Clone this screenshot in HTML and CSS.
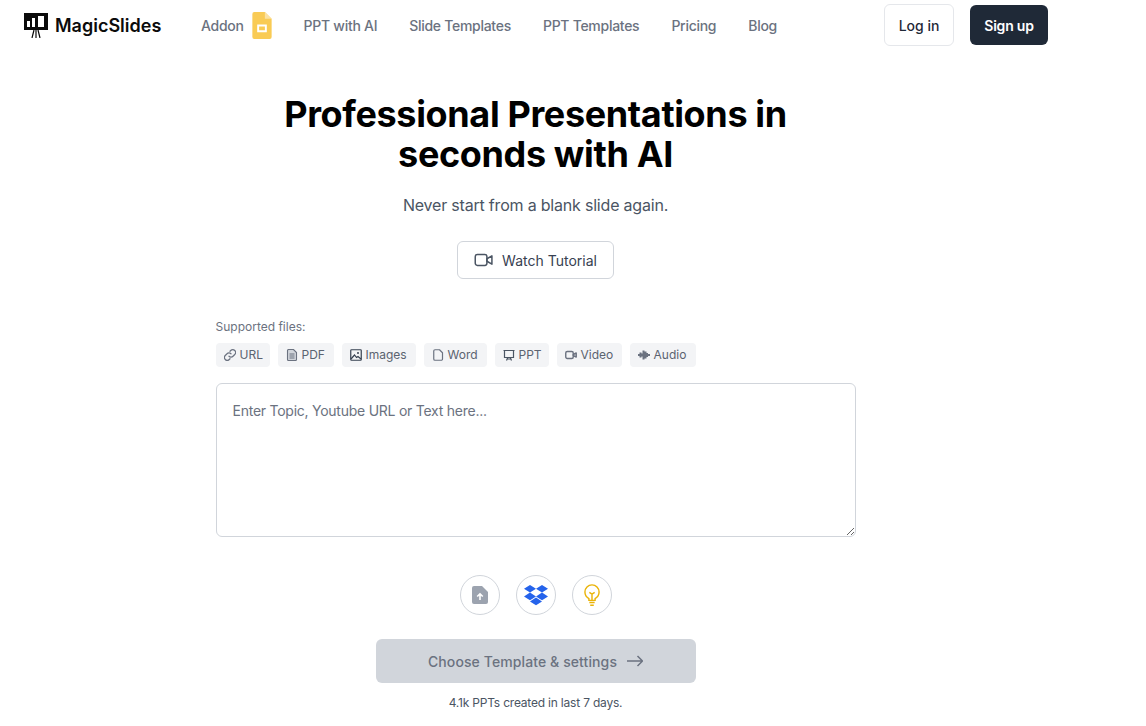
FILE: index.html
```html
<!DOCTYPE html>
<html lang="en">
<head>
  <meta charset="UTF-8">
  <meta name="viewport" content="width=device-width, initial-scale=1.0">
  <title>MagicSlides</title>
  <link rel="stylesheet" href="styles.css">
</head>
<body>
  <div class="page">
    <nav class="nav">
      <a class="logo">
        <svg width="24" height="25" viewBox="0 0 24 25">
          <path fill="#0b0b0b" fill-rule="evenodd" d="M0 0h24v17H0zM3 8v6h3V8zM8 5v9h3V5zM14 3v11h6V3z"/>
          <path stroke="#0b0b0b" stroke-width="1.2" fill="none" d="M10 17l-2 8M12 17v8M14 17l2 8"/>
        </svg>
        <span>MagicSlides</span>
      </a>
      <div class="nav-links">
        <a class="addon">Addon
          <svg width="20" height="27" viewBox="0 0 20 28">
            <path fill="#f9cb55" d="M2 0h11l7 7v19a2 2 0 0 1-2 2H2a2 2 0 0 1-2-2V2a2 2 0 0 1 2-2z"/>
            <path fill="#fbe2a3" d="M13 0l7 7h-7z"/>
            <path fill="#fff" fill-rule="evenodd" d="M5 13h10v8H5zM7 15v4h6v-4z"/>
          </svg>
        </a>
        <a>PPT with AI</a>
        <a>Slide Templates</a>
        <a>PPT Templates</a>
        <a>Pricing</a>
        <a>Blog</a>
      </div>
      <div class="nav-auth">
        <button class="btn-login">Log in</button>
        <button class="btn-signup">Sign up</button>
      </div>
    </nav>

    <main class="hero">
      <h1>Professional Presentations in<br>seconds with AI</h1>
      <p class="subtitle">Never start from a blank slide again.</p>
      <button class="btn-tutorial">
        <svg width="20" height="20" viewBox="0 0 24 24" fill="none" stroke="#4b5563" stroke-width="1.8" stroke-linejoin="round">
          <rect x="1.5" y="5.5" width="14" height="13" rx="2.5"/>
          <path d="M15.5 10.5l6-3.5v10l-6-3.5z"/>
        </svg>
        Watch Tutorial
      </button>

      <section class="form">
        <div class="files-label">Supported files:</div>
        <div class="chips">
          <span class="chip">
            <svg viewBox="0 0 24 24" fill="none" stroke="#6b7280" stroke-width="2.4" stroke-linecap="round"><path d="M10 14.500a5.500 5.500 0 0 0 8 0l3.500-3.500a5.500 5.500 0 0 0-8-8l-1.500 1.500"/><path d="M14 9.500a5.500 5.500 0 0 0-8 0l-3.500 3.500a5.500 5.500 0 0 0 8 8l1.500-1.500"/></svg>
            URL
          </span>
          <span class="chip">
            <svg viewBox="0 0 24 24" fill="none" stroke="#6b7280" stroke-width="2.2"><path d="M5 1h10l6 6v14a2 2 0 0 1-2 2H5a2 2 0 0 1-2-2V3a2 2 0 0 1 2-2z" fill="#d1d5db"/><path d="M7 10h10M7 14h10M7 18h10"/></svg>
            PDF
          </span>
          <span class="chip">
            <svg viewBox="0 0 24 24" fill="none" stroke="#374151" stroke-width="2.4"><rect x="1.500" y="1.500" width="21" height="21" rx="1.500"/><path d="M2 20l7-8 4 5 3-2 6 5"/><circle cx="16" cy="8" r="2" fill="#374151" stroke="none"/></svg>
            Images
          </span>
          <span class="chip">
            <svg viewBox="0 0 24 24" fill="none" stroke="#6b7280" stroke-width="2.4" stroke-linejoin="round"><path d="M6 1.500h9l6 6V20a2.500 2.500 0 0 1-2.500 2.500H6A2.500 2.500 0 0 1 3.500 20V4A2.500 2.500 0 0 1 6 1.500z"/></svg>
            Word
          </span>
          <span class="chip">
            <svg viewBox="0 0 24 24" fill="none" stroke="#4b5563" stroke-width="2.4"><path d="M1 3h22M3 3v14h18V3M7 23l2.500-6M17 23l-2.500-6M9 20h6"/></svg>
            PPT
          </span>
          <span class="chip">
            <svg viewBox="0 0 24 24" fill="none" stroke="#6b7280" stroke-width="2.800" stroke-linejoin="round"><rect x="1.500" y="5" width="15" height="14" rx="3"/><path d="M16.500 11l6-3v8l-6-3z"/></svg>
            Video
          </span>
          <span class="chip">
            <svg viewBox="0 0 24 24" fill="#6b7280"><path d="M0 10h3v4H0zM3 7h4v10H3zM7 9h2v6H7zM9 3h4v18H9zM13 5h4v14h-4zM17 8h3v8h-3zM20 10h4v4h-4z"/></svg>
            Audio
          </span>
        </div>
        <textarea class="topic" placeholder="Enter Topic, Youtube URL or Text here..."></textarea>

        <div class="tools">
          <span class="tool">
            <svg width="16" height="18" viewBox="0 0 16 18">
              <path fill="#9ca3af" d="M2 0h8l6 6v10a2 2 0 0 1-2 2H2a2 2 0 0 1-2-2V2a2 2 0 0 1 2-2z"/>
              <path fill="none" stroke="#fff" stroke-width="1.600" d="M8 14V8M5.200 10.500L8 7.800l2.800 2.700"/>
            </svg>
          </span>
          <span class="tool">
            <svg width="24" height="21" viewBox="0 0 24 21" fill="#2563eb">
              <path d="M6 0l6 3.800-6 3.800-6-3.800zM18 0l6 3.800-6 3.800-6-3.800zM0 11.400l6-3.800 6 3.800-6 3.800zM18 7.600l6 3.800-6 3.800-6-3.800zM6 16.400l6-3.800 6 3.800-6 3.800z"/>
            </svg>
          </span>
          <span class="tool">
            <svg width="16" height="23" viewBox="0 0 18 26" fill="none" stroke="#eab308" stroke-width="1.600">
              <path d="M5.500 16.500C3 15 1 12.500 1 9a8 8 0 0 1 16 0c0 3.500-2 6-4.500 7.500v2h-7z"/>
              <path d="M6 9.500l3 2 3-2M9 11.500v7M6 21h6M7 24h4"/>
            </svg>
          </span>
        </div>

        <button class="btn-choose">
          Choose Template &amp; settings
          <svg width="16" height="12" viewBox="0 0 16 12" fill="none" stroke="#6b7280" stroke-width="1.500"><path d="M0 6h15M10.500 1l5 5-5 5"/></svg>
        </button>
        <p class="count">4.1k PPTs created in last 7 days.</p>
      </section>
    </main>
  </div>
</body>
</html>
```

FILE: styles.css
```css
* {
  box-sizing: border-box;
}

body {
  margin: 0;
  font-family: Inter, 'Open Sans', sans-serif;
  background-color: #fff;
  color: #111;
  overflow: hidden;
}

.page {
  width: 1071px;
  height: 726px;
}

.nav {
  display: flex;
  align-items: center;
  height: 50px;
  padding: 0 23px 0 24px;
}

.logo {
  display: flex;
  align-items: center;
  gap: 7px;
  font-size: 18px;
  font-weight: 600;
  color: #0b0b0b;
  width: 177px;
}

.nav-links {
  display: flex;
  align-items: center;
  gap: 32px;
  flex: 1;
  font-size: 14px;
  font-weight: 500;
  letter-spacing: -0.28px;
  color: #6b7280;
}

.addon {
  display: flex;
  align-items: center;
  gap: 8px;
}

.nav-auth {
  display: flex;
  align-items: center;
  gap: 16px;
}

button {
  font-family: inherit;
}

.btn-login {
  width: 70px;
  height: 42px;
  background: #fff;
  border: 1px solid #e5e7eb;
  border-radius: 6px;
  font-size: 14px;
  font-weight: 500;
  color: #1f2937;
}

.btn-signup {
  width: 78px;
  height: 40px;
  background: #1f2937;
  border: none;
  border-radius: 6px;
  font-size: 14px;
  font-weight: 600;
  letter-spacing: -0.2px;
  color: #fff;
}

.hero {
  display: flex;
  flex-direction: column;
  align-items: center;
  padding-top: 44px;
}

h1 {
  margin: 0;
  font-size: 36px;
  line-height: 40px;
  font-weight: 700;
  letter-spacing: -0.36px;
  text-align: center;
  color: #000;
}

.subtitle {
  margin: 19px 0 0;
  font-size: 16px;
  line-height: 24px;
  letter-spacing: -0.2px;
  color: #4b5563;
}

.btn-tutorial {
  display: flex;
  align-items: center;
  justify-content: center;
  gap: 8px;
  width: 157px;
  height: 38px;
  margin-top: 24px;
  background: #fff;
  border: 1px solid #d1d5db;
  border-radius: 6px;
  font-size: 14px;
  font-weight: 400;
  color: #374151;
}

.form {
  display: flex;
  flex-direction: column;
  width: 640px;
  margin-top: 40px;
}

.files-label {
  font-size: 12px;
  line-height: 16px;
  color: #6b7280;
}

.chips {
  display: grid;
  grid-template-columns: 54px 56px 74px 63px 54px 65px 66px;
  gap: 8px;
  margin-top: 8px;
}

.chip {
  display: flex;
  align-items: center;
  gap: 4px;
  height: 24px;
  padding: 0 0 2px 8px;
  background: #f3f4f6;
  border-radius: 4px;
  font-size: 12px;
  color: #5b6370;
}

.chip svg {
  width: 12px;
  height: 12px;
  margin-top: 2px;
}

.topic {
  display: block;
  width: 100%;
  height: 154px;
  margin-top: 16px;
  padding: 17px 16px;
  border: 1px solid #d1d5db;
  border-radius: 6px;
  font-family: inherit;
  font-size: 14px;
  line-height: 20px;
  letter-spacing: -0.25px;
  outline: none;
}

.topic::placeholder {
  color: #6b7280;
}

.tools {
  display: flex;
  justify-content: center;
  gap: 16px;
  margin-top: 38px;
}

.tool {
  display: flex;
  align-items: center;
  justify-content: center;
  width: 40px;
  height: 40px;
  border: 1px solid #d1d5db;
  border-radius: 50%;
}

.btn-choose {
  display: flex;
  align-items: center;
  justify-content: center;
  gap: 10px;
  align-self: center;
  width: 320px;
  height: 44px;
  margin-top: 24px;
  background: #d1d5db;
  border: none;
  border-radius: 6px;
  font-size: 14px;
  font-weight: 500;
  letter-spacing: 0.1px;
  color: #6b7280;
}

.count {
  margin: 12px 0 0;
  font-size: 12px;
  line-height: 16px;
  letter-spacing: -0.2px;
  text-align: center;
  color: #4b5563;
}
```
